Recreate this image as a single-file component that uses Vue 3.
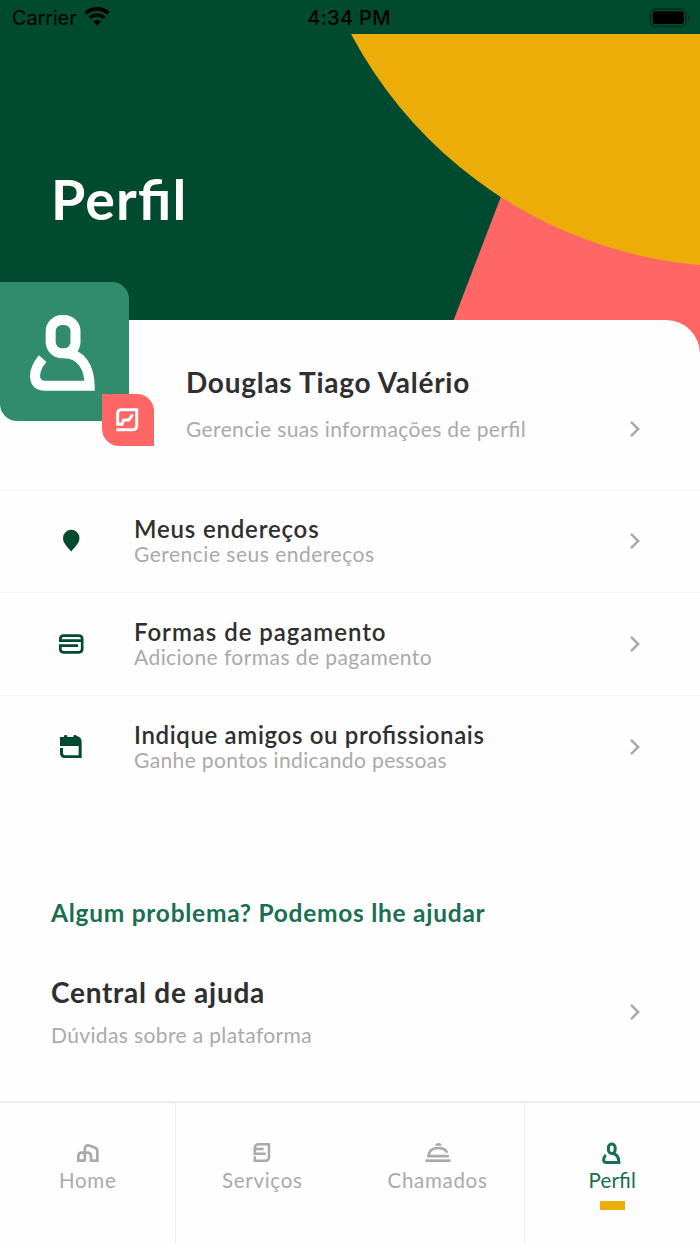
<script setup>
const rows = [
  { id: 'pin', title: 'Meus endereços', sub: 'Gerencie seus endereços' },
  { id: 'card', title: 'Formas de pagamento', sub: 'Adicione formas de pagamento' },
  { id: 'calendar', title: 'Indique amigos ou profissionais', sub: 'Ganhe pontos indicando pessoas' },
]
</script>

<template>
  <div class="screen">
    <header class="hero">
      <svg class="shapes" viewBox="0 0 700 326" aria-hidden="true">
        <path d="M518 118L453.7 286V326H700V118z" fill="#ff6666" />
        <circle cx="737.4" cy="-204.6" r="437.2" fill="#ecad09" />
      </svg>
      <div class="status">
        <div class="carrier">
          <span>Carrier</span>
          <svg width="26" height="19" viewBox="0 0 26 19" fill="none" stroke="#000" stroke-width="3.7">
            <path d="M1.5 6.5C8 .4 18 .4 24.5 6.5" />
            <path d="M5.8 10.9C10 7 16 7 20.2 10.9" />
            <path d="M13 18.6L9 14.6Q13 11.6 17 14.6z" fill="#000" stroke="none" />
          </svg>
        </div>
        <span class="clock">4:34 PM</span>
        <svg class="battery" width="42" height="20" viewBox="0 0 42 20">
          <rect x="1.5" y="1" width="35.5" height="17.5" rx="5" fill="none" stroke="#002d1c" stroke-width="1.5" />
          <rect x="3.8" y="3.2" width="31" height="12.8" rx="2.5" />
          <path d="M39 6.5q3 3.3 0 6.600z" fill="#002d1c" />
        </svg>
      </div>
      <h1>Perfil</h1>
    </header>

    <main class="sheet">
      <div class="avatar">
        <svg width="73.333" height="83.333" viewBox="80 120 220 250" fill="none" stroke="#fff" stroke-width="30">
          <rect x="154" y="147" width="74.500" height="100" rx="34" />
          <path d="M130 263Q108 288 107 316Q109 344 137 344H271C270 292 248 247 195 247" />
        </svg>
        <div class="badge">
          <svg width="24" height="25" viewBox="345 411 72 75" fill="none" stroke="#fff" stroke-width="9">
            <path d="M353 463V430Q353 419 364 419H410V468Q410 479 399 479H349" />
            <path d="M349 463H366L371 450H386L398 434" />
          </svg>
        </div>
      </div>

      <section class="profile">
        <div>
          <h2 class="name">Douglas Tiago Valério</h2>
          <p class="about">Gerencie suas informações de perfil</p>
        </div>
        <svg class="chevron" viewBox="0 0 12 18"><path d="M2 1.800L9.200 9L2 16.200" /></svg>
      </section>

      <section v-for="r in rows" :key="r.id" class="row" :class="r.id">
        <svg v-if="r.id === 'pin'" class="icon" viewBox="24 22 78 78">
          <path d="M63.500 93C57 83 39 70 39 52A24.700 24.700 0 0 1 88.400 52C88.400 70 70 83 63.500 93z" fill="#004b2f" />
        </svg>
        <svg v-else-if="r.id === 'card'" class="icon" viewBox="24 333 78 78" fill="none" stroke="#004b2f" stroke-width="8">
          <path d="M97 362H31V357Q31 347 41 347H86Q96.500 347 96.500 357V387Q96.500 397 86 397H41Q31 397 31 387V377H84" />
        </svg>
        <svg v-else class="icon" viewBox="24 642 78 78">
          <path d="M30 651H42V648Q42 645 47 645T52 648V651H70V648Q70 645 75 645T80 648Q95 651 95 666V714H45Q30 714 30 700V684H39V698Q39 706 48 706H86V678H30z" fill="#004b2f" />
        </svg>
        <div class="copy">
          <h3>{{ r.title }}</h3>
          <p>{{ r.sub }}</p>
        </div>
        <svg class="chevron" viewBox="0 0 12 18"><path d="M2 1.800L9.200 9L2 16.200" /></svg>
      </section>

      <section class="help">
        <h4>Algum problema? Podemos lhe ajudar</h4>
        <div class="center">
          <div>
            <h2 class="central">Central de ajuda</h2>
            <p class="doubts">Dúvidas sobre a plataforma</p>
          </div>
          <svg class="chevron" viewBox="0 0 12 18"><path d="M2 1.800L9.200 9L2 16.200" /></svg>
        </div>
      </section>
    </main>

    <nav class="tabs">
      <a class="tab home">
        <svg width="26" height="24" viewBox="106 153 78 72" fill="none" stroke="#aaa" stroke-width="8">
          <path d="M137 212H116V199Q116 188 127 188H143Q154 188 154 199V212H173V183Q173 177 168 174L151 167Q135.500 163 135.500 177V212" />
        </svg>
        <span>Home</span>
      </a>
      <a class="tab services">
        <svg width="26" height="24" viewBox="628 153 78 72" fill="none" stroke="#aaa" stroke-width="7.5">
          <path d="M678 191.500H645.500V174Q645.500 162.500 657 162.500H688V202Q688 212.500 677 212.500H645.500V199M646 177H672" />
        </svg>
        <span>Serviços</span>
      </a>
      <a class="tab calls">
        <svg width="26" height="24" viewBox="163.500 153 78 72" fill="none" stroke="#aaa" stroke-width="8">
          <path d="M165 212H240" />
          <path d="M170 198.500H235M174 198Q176 174 203 174Q224 174 230 188" />
          <path d="M194 167Q195 159 204 159T214 167z" fill="#aaa" stroke="none" />
        </svg>
        <span>Chamados</span>
      </a>
      <a class="tab active">
        <svg width="26" height="24" viewBox="58 115 277 256" fill="none" stroke="#196f51" stroke-width="32">
          <rect x="158" y="147" width="72" height="100" rx="36" />
          <path d="M130 263Q108 288 107 316Q109 344 137 344H271C270 292 248 247 195 247" />
        </svg>
        <span>Perfil</span>
        <i class="marker"></i>
      </a>
    </nav>
  </div>
</template>

<style>
body { margin: 0; }
</style>

<style scoped>
* { box-sizing: border-box; }
h1, h2, h3, h4, p { margin: 0; white-space: nowrap; }
.screen {
  display: flex;
  flex-direction: column;
  width: 700px;
  height: 1244px;
  overflow: hidden;
  background: #fefefe;
  font-family: Lato, "Liberation Sans", sans-serif;
  font-feature-settings: "liga" 1;
  color: #2f2f2f;
}
.hero { position: relative; flex: none; height: 360px; background: #004b2f; }
.shapes { position: absolute; top: 34px; left: 0; width: 700px; height: 326px; }
.status {
  position: relative;
  display: grid;
  grid-template-columns: 1fr auto 1fr;
  align-items: center;
  height: 34px;
  padding: 2px 9px 0 12px;
  font: 400 20px/32px Inter, sans-serif;
  color: #000;
}
.carrier { display: flex; align-items: center; gap: 8px; letter-spacing: -0.150px; }
.carrier svg { margin: -3px 0 0 -1px; }
.clock { font-weight: 500; letter-spacing: 0.300px; margin-left: -5px; }
.battery { justify-self: end; }
h1 {
  position: relative;
  margin: 133px 0 0 51px;
  font-size: 55.500px;
  line-height: 64px;
  font-weight: 700;
  letter-spacing: 1.200px;
  color: #fff;
}
.sheet {
  position: relative;
  flex: none;
  height: 781px;
  margin-top: -40.500px;
  background: #fefefe;
  border-top-right-radius: 34px;
}
.avatar {
  position: absolute;
  top: -37.500px;
  left: 0;
  width: 128.500px;
  height: 139px;
  padding: 28.500px 0 0 26.300px;
  background: #318c6e;
  border-radius: 0 17px 0 17px;
}
.badge {
  position: absolute;
  left: 101.700px;
  top: 112px;
  display: flex;
  align-items: center;
  justify-content: center;
  width: 52.300px;
  height: 52px;
  padding: 0 1px 1px 0;
  background: #ff6666;
  border-radius: 0 17px 0 17px;
}
.profile {
  display: flex;
  justify-content: space-between;
  height: 170px;
  padding: 46px 59px 0 186px;
}
.chevron {
  flex: none;
  width: 12px;
  height: 18px;
  fill: none;
  stroke: #aaa;
  stroke-width: 2.500;
}
.profile .chevron { margin-top: 54.500px; }
.name, .central { font-size: 28px; line-height: 32px; font-weight: 700; letter-spacing: 0.730px; }
p { font-size: 21px; line-height: 26px; letter-spacing: 0.370px; color: #aaa; }
.about { margin-top: 18px; }
.row {
  display: flex;
  align-items: center;
  height: 103px;
  padding: 0 59px 0 58px;
  border-top: 1px solid #f5f6f6;
}
.row.pin { height: 102px; padding-bottom: 1px; }
.icon { flex: none; width: 26px; height: 26px; margin-right: 50px; }
.copy { flex: 1; padding-top: 1px; }
h3 { font-size: 24px; line-height: 26px; font-weight: 600; letter-spacing: 0.820px; }
.card h3 { letter-spacing: 0.950px; }
.calendar h3 { letter-spacing: 0.650px; }
.row p { line-height: 24px; }
.pin p { letter-spacing: 0.500px; }
.card p { letter-spacing: 0.440px; }
.help { padding: 100.500px 59px 0 51px; }
h4 { font-size: 24.500px; line-height: 30px; font-weight: 700; letter-spacing: 0.730px; color: #196f51; }
.center { display: flex; align-items: center; justify-content: space-between; margin-top: 48px; }
.doubts { margin-top: 14px; }
.tabs {
  display: flex;
  flex: none;
  height: 143.500px;
  border-top: 2px solid #e9ecec;
}
.tab {
  display: flex;
  flex-direction: column;
  align-items: center;
  width: 174.500px;
  padding-top: 38px;
  font-size: 20.500px;
  font-weight: 400;
  line-height: 28px;
  letter-spacing: 0.700px;
  color: #aaa;
}
.tab span { margin-top: 1.500px; }
.home { width: 175.500px; padding-left: 1px; border-right: 1.500px solid #e9eeed; }
.services { width: 173.500px; }
.calls { width: 176px; padding-left: 2px; border-right: 1.500px solid #e9eeed; }
.active { letter-spacing: 0.200px; color: #196f51; }
.marker { width: 25.500px; height: 9px; margin-top: 7px; background: #ecad09; }
</style>
